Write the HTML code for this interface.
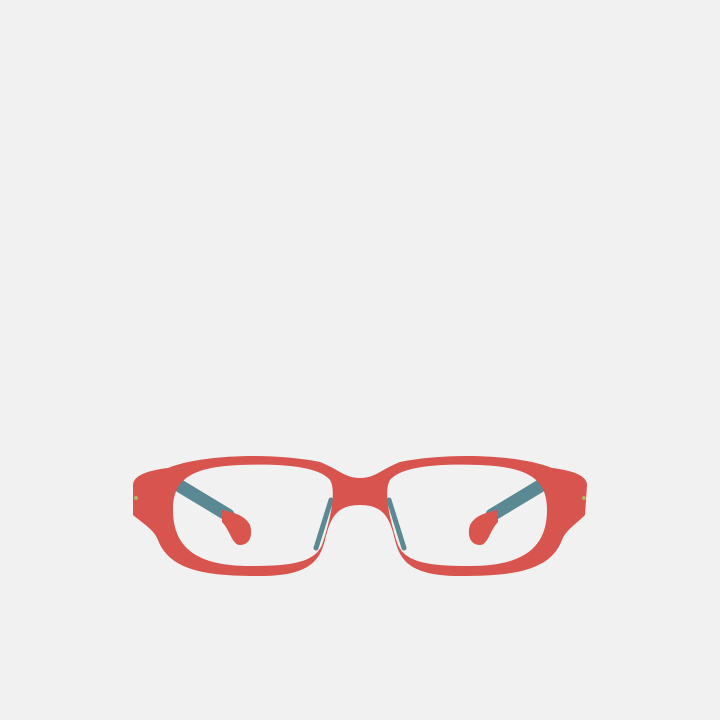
<!DOCTYPE html>
<html><head><style>html,body{margin:0;padding:0;background:#f1f1f1;width:720px;height:720px;overflow:hidden}</style></head>
<body>
<svg width="720" height="720" viewBox="0 0 720 720" xmlns="http://www.w3.org/2000/svg">
<rect width="720" height="720" fill="#f1f1f1"/>
<g stroke-linecap="round" fill="none">
<path d="M165,477 L228,515" stroke="#5a8893" stroke-width="13"/>
<path d="M555,477 L492,515" stroke="#5a8893" stroke-width="13"/>
<path d="M331,500 L316,548" stroke="#5a8893" stroke-width="5"/>
<path d="M389,500 L404,548" stroke="#5a8893" stroke-width="5"/>
</g>
<path d="M222,510 C232,512 245,515 250,525 C253,535 250,545 240,545 C232,545 230,530 222,522 Z" fill="#d9564f"/>
<path d="M498,510 C488,512 475,515 470,525 C467,535 470,545 480,545 C488,545 490,530 498,522 Z" fill="#d9564f"/>
<path fill-rule="evenodd" fill="#d8544e" d="M133,485 C133,475 150,470 168,468 C200,455 270,452 320,462 C340,470 345,478 360,478 C375,478 380,470 400,462 C450,452 520,455 552,468 C570,470 587,475 587,485 L585,515 C575,525 566,530 562,540 C550,572 510,576 460,576 C410,576 400,560 395,540 C390,520 385,505 360,505 C335,505 330,520 325,540 C320,560 310,576 260,576 C210,576 170,572 158,540 C154,530 145,525 133,515 Z
M173,510 C173,480 190,467 240,465 C290,463 320,468 330,480 C336,490 332,515 322,545 C314,563 290,566 250,566 C200,566 173,550 173,510 Z
M547,510 C547,480 530,467 480,465 C430,463 400,468 390,480 C384,490 388,515 398,545 C406,563 430,566 470,566 C520,566 547,550 547,510 Z"/>
<circle cx="136" cy="498" r="2" fill="#b9b060"/>
<circle cx="584" cy="498" r="2" fill="#b9b060"/>
</svg>
</body></html>
